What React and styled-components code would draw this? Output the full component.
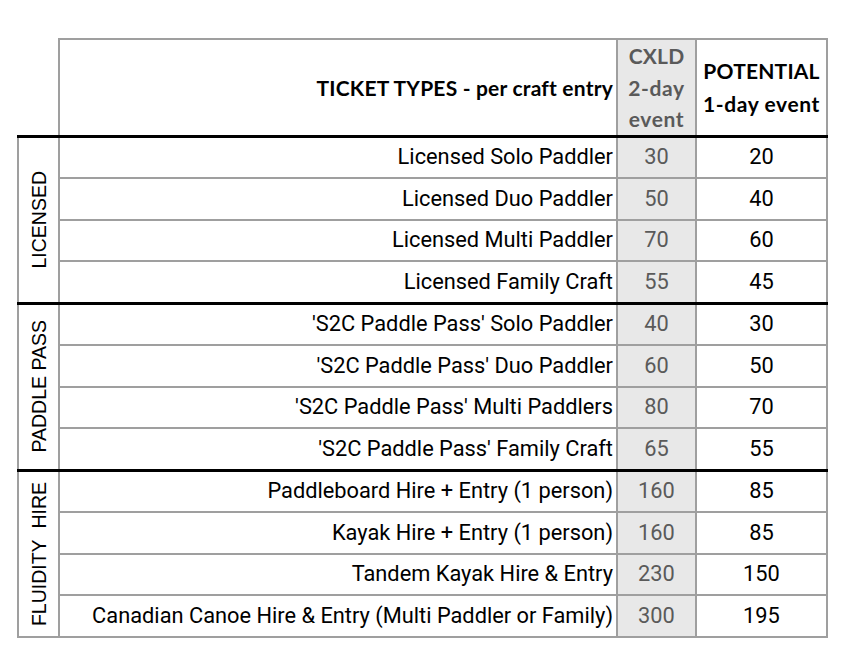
import React from 'react';
import styled, { createGlobalStyle } from 'styled-components';

const GlobalStyle = createGlobalStyle`
    html, body {
        margin: 0;
        padding: 0;
        background: #ffffff;
    }
`;

const groups = [
    {
        name: 'LICENSED',
        rows: [
            ['Licensed Solo Paddler', 30, 20],
            ['Licensed Duo Paddler', 50, 40],
            ['Licensed Multi Paddler', 70, 60],
            ['Licensed Family Craft', 55, 45],
        ],
    },
    {
        name: 'PADDLE PASS',
        rows: [
            ["'S2C Paddle Pass' Solo Paddler", 40, 30],
            ["'S2C Paddle Pass' Duo Paddler", 60, 50],
            ["'S2C Paddle Pass' Multi Paddlers", 80, 70],
            ["'S2C Paddle Pass' Family Craft", 65, 55],
        ],
    },
    {
        name: 'FLUIDITY\u00a0\u00a0HIRE',
        rows: [
            ['Paddleboard Hire + Entry (1 person)', 160, 85],
            ['Kayak Hire + Entry (1 person)', 160, 85],
            ['Tandem Kayak Hire & Entry', 230, 150],
            ['Canadian Canoe Hire & Entry (Multi Paddler or Family)', 300, 195],
        ],
    },
];

const App = () => {
    return (
        <Page>
            <GlobalStyle />
            <Table>
                <colgroup>
                    <col style={{ width: 41 }} />
                    <col style={{ width: 558 }} />
                    <col style={{ width: 79 }} />
                    <col style={{ width: 131 }} />
                </colgroup>
                <thead>
                    <HeadRow>
                        <Corner />
                        <HeadCell $align="right">TICKET TYPES - per craft entry</HeadCell>
                        <HeadCell $cxld>
                            CXLD<br />
                            <Wide>2-day</Wide><br />
                            <Wide>event</Wide>
                        </HeadCell>
                        <HeadCell>
                            POTENTIAL<br />
                            <Wide>1-day event</Wide>
                        </HeadCell>
                    </HeadRow>
                </thead>
                <tbody>
                    {groups.map((g) =>
                        g.rows.map((r, i) => (
                            <Row key={r[0]}>
                                {i === 0 && (
                                    <GroupCell rowSpan={g.rows.length}>
                                        <GroupLabel>{g.name}</GroupLabel>
                                    </GroupCell>
                                )}
                                <LabelCell $first={i === 0}>{r[0]}</LabelCell>
                                <ValueCell $first={i === 0} $cxld>{r[1]}</ValueCell>
                                <ValueCell $first={i === 0}>{r[2]}</ValueCell>
                            </Row>
                        ))
                    )}
                </tbody>
            </Table>
        </Page>
    );
};

const Page = styled.div`
    padding: 38px 0 0 17px;
    width: 860px;
    height: 661px;
    box-sizing: border-box;
`;

const Table = styled.table`
    border-collapse: collapse;
    table-layout: fixed;
    width: 809px;
    font-family: Roboto, "Liberation Sans", sans-serif;
    font-size: 21.8px;
    color: #000;
`;

const HeadRow = styled.tr`
    height: 95px;
`;

const Corner = styled.th`
    border: none;
    padding: 0;
`;

const HeadCell = styled.th`
    border: 2px solid #9f9f9f;
    border-bottom: 3px solid #000;
    padding: 0 3px;
    font-family: Lato, "Liberation Sans", sans-serif;
    font-weight: 700;
    font-size: 21px;
    letter-spacing: 0.2px;
    line-height: ${(p) => (p.$cxld ? '31.5px' : '33px')};
    text-align: ${(p) => p.$align || 'center'};
    vertical-align: middle;
    white-space: nowrap;
    background: ${(p) => (p.$cxld ? '#e8e8e8' : '#fff')};
    color: ${(p) => (p.$cxld ? '#5a5a5a' : '#000')};
`;

const Wide = styled.span`
    letter-spacing: 0.6px;
`;

const Row = styled.tr`
    height: 41.75px;
`;

const GroupCell = styled.td`
    border: 2px solid #9f9f9f;
    border-top: 3px solid #000;
    padding: 0;
    vertical-align: middle;
    text-align: center;
`;

const GroupLabel = styled.div`
    writing-mode: vertical-rl;
    transform: rotate(180deg);
    margin: 0 auto;
    font-family: "Liberation Sans", Arial, sans-serif;
    font-size: 19.5px;
    line-height: 22px;
    white-space: nowrap;
`;

const LabelCell = styled.td`
    border: 2px solid #9f9f9f;
    border-top: ${(p) => (p.$first ? '3px solid #000' : '2px solid #9f9f9f')};
    padding: 0 3px 0 0;
    text-align: right;
    vertical-align: middle;
    white-space: nowrap;
    line-height: 24px;
`;

const ValueCell = styled.td`
    border: 2px solid #9f9f9f;
    border-top: ${(p) => (p.$first ? '3px solid #000' : '2px solid #9f9f9f')};
    padding: 0;
    text-align: center;
    vertical-align: middle;
    line-height: 24px;
    background: ${(p) => (p.$cxld ? '#e8e8e8' : '#fff')};
    color: ${(p) => (p.$cxld ? '#5a5a5a' : '#000')};
`;

export default App;
